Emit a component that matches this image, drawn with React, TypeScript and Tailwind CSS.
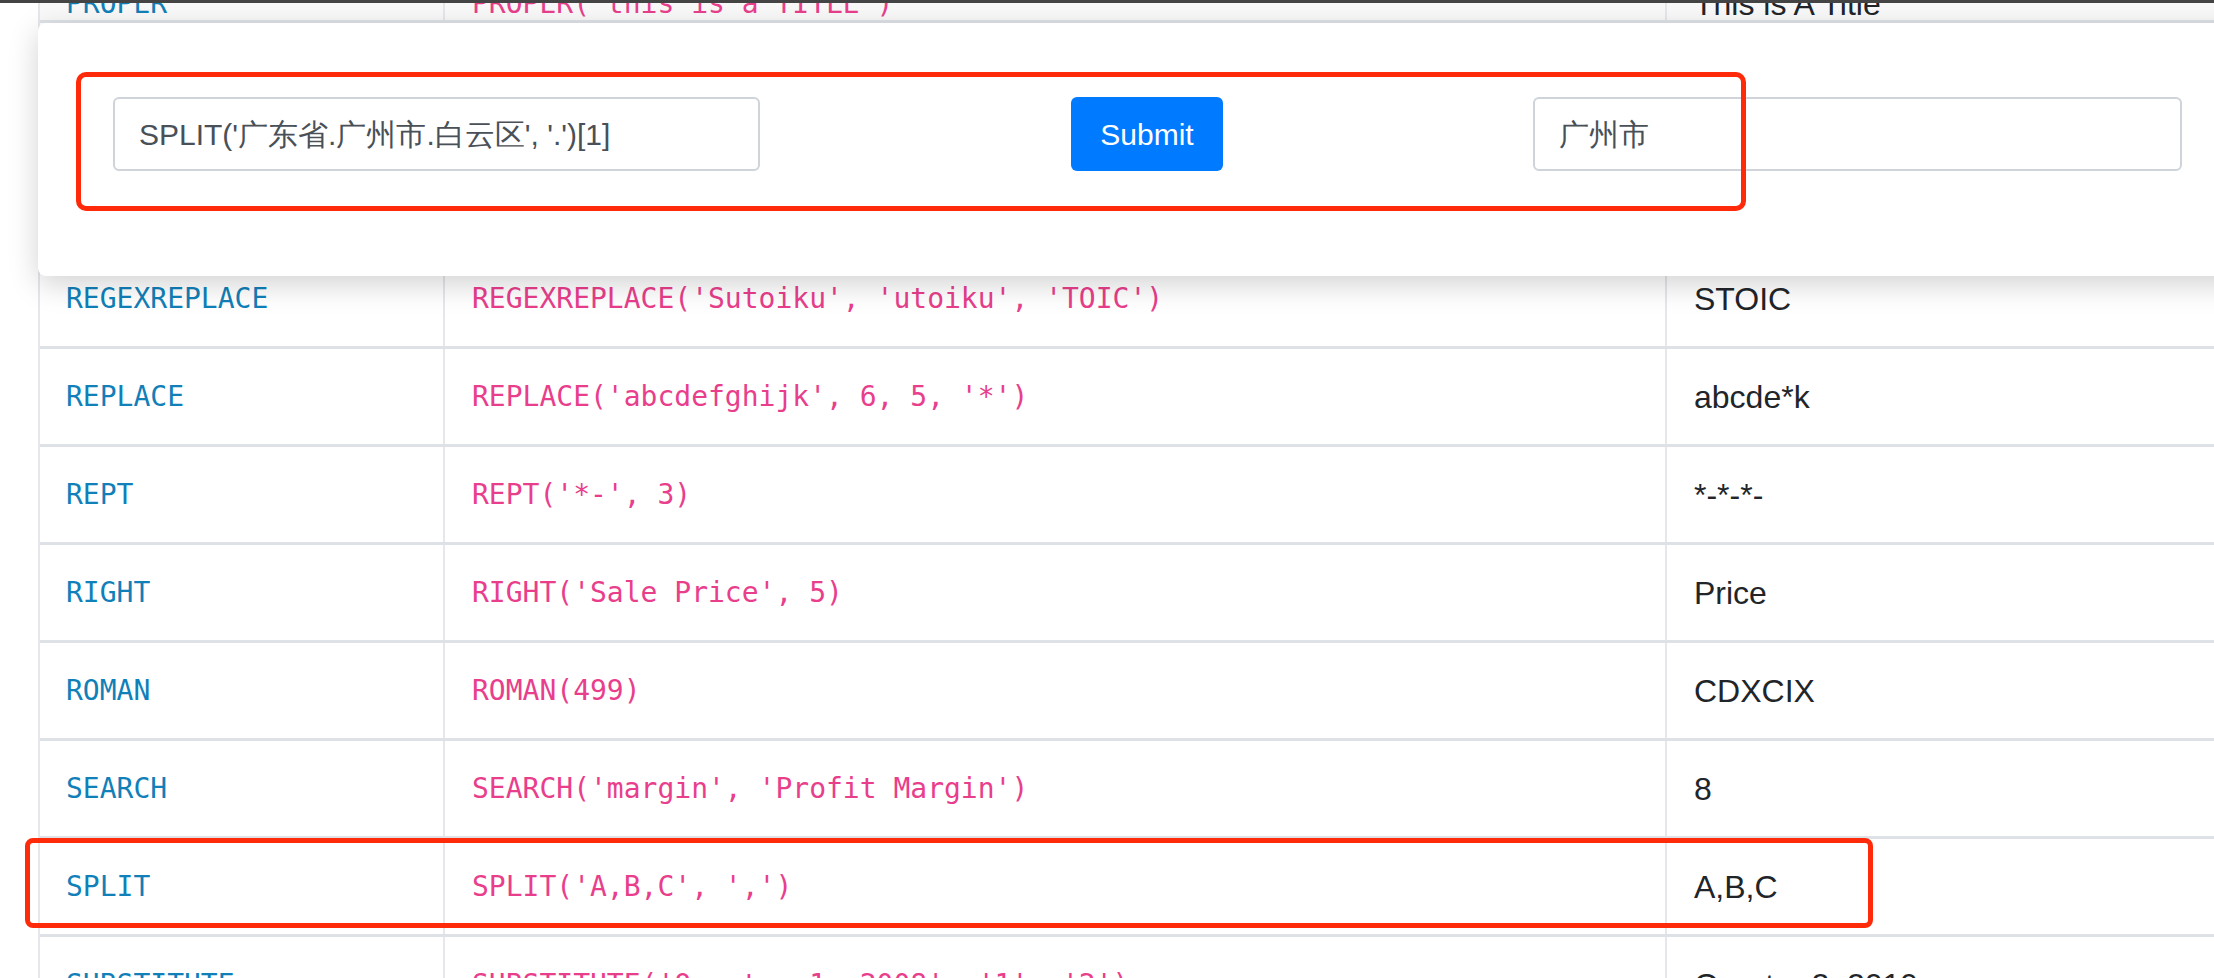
import React from "react";

const rows = [
  { name: "REGEXREPLACE", example: "REGEXREPLACE('Sutoiku', 'utoiku', 'TOIC')", result: "STOIC" },
  { name: "REPLACE", example: "REPLACE('abcdefghijk', 6, 5, '*')", result: "abcde*k" },
  { name: "REPT", example: "REPT('*-', 3)", result: "*-*-*-" },
  { name: "RIGHT", example: "RIGHT('Sale Price', 5)", result: "Price" },
  { name: "ROMAN", example: "ROMAN(499)", result: "CDXCIX" },
  { name: "SEARCH", example: "SEARCH('margin', 'Profit Margin')", result: "8" },
  { name: "SPLIT", example: "SPLIT('A,B,C', ',')", result: "A,B,C" },
  { name: "SUBSTITUTE", example: "SUBSTITUTE('Quarter 1, 2008', '1', '2')", result: "Quarter 2, 2019" },
];

const mono = "font-[DejaVu_Sans_Mono] text-[28px]";
const sans = "font-[Liberation_Sans]";

function Row({ name, example, result, h = "h-[98px]" }: { name: string; example: string; result: string; h?: string }) {
  return (
    <div className={`flex ${h} border-b-[3px] border-[#dee2e6] items-center`}>
      <div className={`w-[405px] h-full flex items-center pl-[26px] border-r-2 border-[#e5e7eb] text-[#117fb8] ${mono}`}>{name}</div>
      <div className={`w-[1222px] h-full flex items-center pl-[27px] border-r-2 border-[#e5e7eb] text-[#e83e8c] ${mono}`}>{example}</div>
      <div className={`flex-1 pl-[27px] text-[32px] text-[#212529] ${sans}`}>{result}</div>
    </div>
  );
}

export default function App() {
  return (
    <div className="relative h-[978px] w-[2214px] overflow-hidden bg-white">
      <div className="absolute top-0 left-0 right-0 h-[3px] bg-[#444] z-30" />

      {/* table behind the popup */}
      <div className="ml-[38px] w-[2300px] border-l-2 border-[#e5e7eb] mt-[-13px]">
        <div className="bg-[#f9f9f9]">
          <Row name="PROPER" example="PROPER('this is a TITLE')" result="This is A Title" h="h-[36px]" />
        </div>
        <div className="h-[228px]" />
        {rows.map((r) => (
          <Row key={r.name} {...r} />
        ))}
      </div>

      {/* popup card */}
      <div className="absolute top-[23px] left-[38px] w-[2220px] h-[253px] bg-white rounded-l-[8px] shadow-[0_8px_30px_rgba(0,0,0,0.18)] z-10">
        <div className="flex items-center pt-[74px] pl-[75px]">
          <div className={`w-[647px] h-[74px] border-2 border-[#ced4da] rounded-[6px] flex items-center pl-[24px] text-[30px] text-[#495057] ${sans}`}>
            SPLIT('广东省.广州市.白云区', '.')[1]
          </div>
          <button className={`ml-[311px] w-[152px] h-[74px] rounded-[6px] bg-[#007bff] text-white text-[30px] ${sans}`}>
            Submit
          </button>
          <div className={`ml-[310px] w-[649px] h-[74px] border-2 border-[#ced4da] rounded-[6px] flex items-center pl-[24px] text-[30px] text-[#495057] ${sans}`}>
            广州市
          </div>
        </div>
      </div>

      {/* highlight boxes */}
      <div className="absolute left-[76px] top-[72px] w-[1670px] h-[139px] border-[5px] border-[#ff2a0a] rounded-[10px] z-20" />
      <div className="absolute left-[25px] top-[838px] w-[1848px] h-[90px] border-[5px] border-[#ff2a0a] rounded-[8px] z-20" />
    </div>
  );
}
